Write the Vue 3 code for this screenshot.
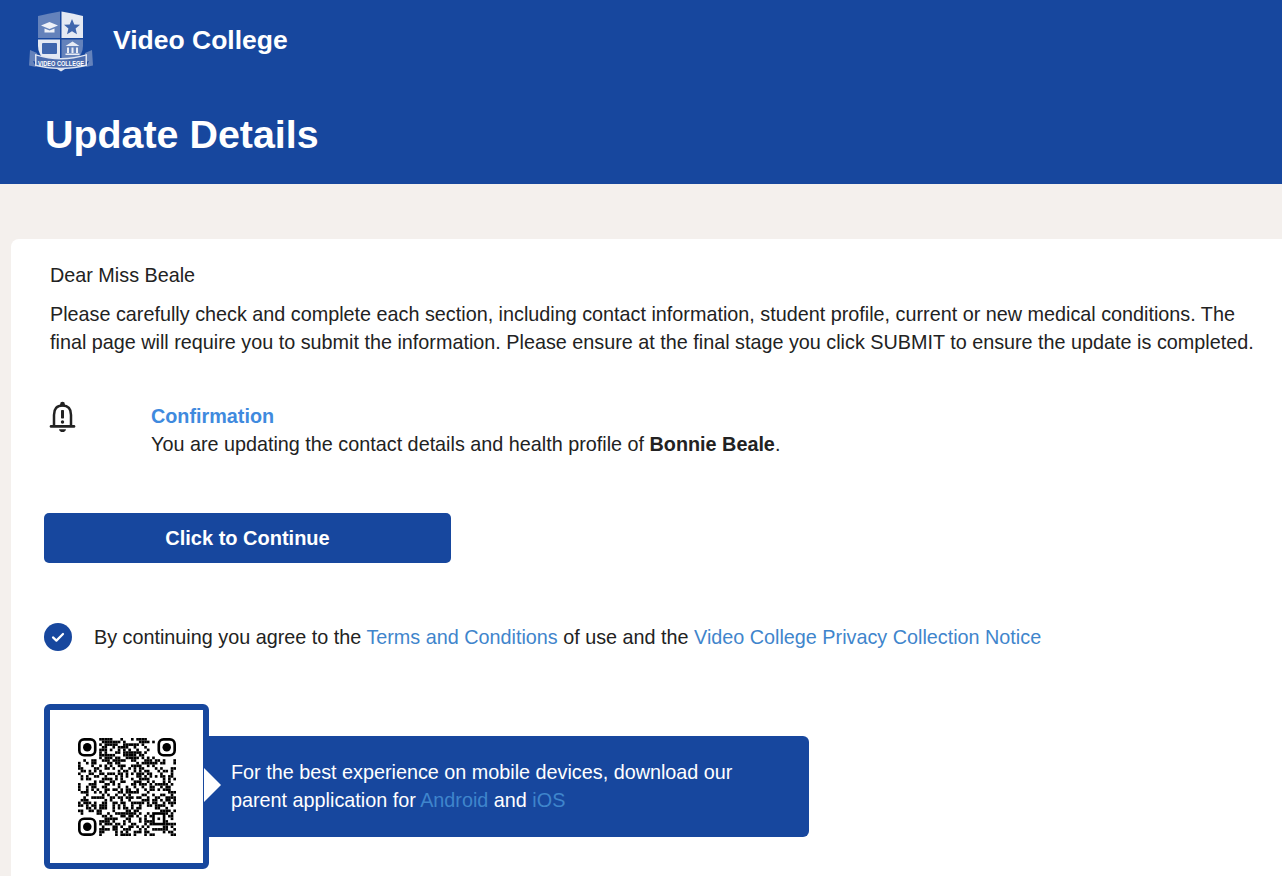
<script setup>
const n = 37
let s = 20240611
const rnd = () => ((s = (s * 1664525 + 1013904223) >>> 0) / 4294967296)
const reserved = (x, y) =>
  (x < 8 && y < 8) ||
  (x > n - 9 && y < 8) ||
  (x < 8 && y > n - 9) ||
  (x >= 28 && x <= 32 && y >= 28 && y <= 32)
const modules = []
for (let y = 0; y < n; y++) {
  for (let x = 0; x < n; x++) {
    if (!reserved(x, y) && rnd() > 0.5) modules.push({ x, y })
  }
}
const finders = [
  { x: 3.5, y: 3.5 },
  { x: n - 3.5, y: 3.5 },
  { x: 3.5, y: n - 3.5 }
]
</script>

<template>
  <div class="page">
    <header class="header">
      <div class="brand">
        <svg class="logo" viewBox="0 0 66 64" aria-hidden="true">
          <path d="M10 6 Q22 3 32 1.5 V28 H10 Z" fill="#6482bb" />
          <path d="M33.5 1.5 Q44 3 55 6 V28 H33.5 Z" fill="#e4e9f3" />
          <path d="M10 29.5 H32 V50 H17 Q10 44 10 36 Z" fill="#e4e9f3" />
          <path d="M33.5 29.5 H55 V36 Q55 44 48 50 H33.5 Z" fill="#6482bb" />
          <path d="M13 15.5 L21.5 12 L30 15.5 L21.5 19 Z" fill="#eef1f8" />
          <path d="M16.5 18.5 L21.5 20.5 L26.5 18.5 V22.5 H16.5 Z" fill="#eef1f8" />
          <path d="M44 9 L46.3 14.4 L52 14.8 L47.6 18.6 L49 24.2 L44 21.2 L39 24.2 L40.4 18.6 L36 14.8 L41.7 14.4 Z" fill="#3f66ad" />
          <rect x="14" y="33" width="15" height="11" rx="1" fill="#3f66ad" />
          <path d="M37.5 36 L44.5 31.5 L51.5 36 Z M39 37.5 h2 v5.5 h-2 Z M43.5 37.5 h2 v5.5 h-2 Z M48 37.5 h2 v5.5 h-2 Z M37.5 43.5 h14 v1.5 h-14 Z" fill="#e8ecf5" />
          <path d="M2 40 L9 43 L9 52 L5 51 L8 57 L1 55.5 Z" fill="#6482bb" />
          <path d="M64 40 L57 43 L57 52 L61 51 L58 57 L65 55.5 Z" fill="#6482bb" />
          <path d="M7 44 Q20 48 33 48 Q46 48 59 44 V56 Q46 59 37 59 L33 61.5 L29 59 Q20 59 7 56 Z" fill="#dfe5f1" />
          <path d="M8.5 45.8 Q20 49.5 33 49.5 Q46 49.5 57.5 45.8 V54.8 Q46 57.8 33 57.8 Q20 57.8 8.5 54.8 Z" fill="#4b6cae" />
          <text x="33" y="56" text-anchor="middle" textLength="46" lengthAdjust="spacingAndGlyphs" class="logo-text">VIDEO COLLEGE</text>
        </svg>
        <span class="brand-name">Video College</span>
      </div>
      <h1 class="title">Update Details</h1>
    </header>

    <main class="card">
      <p class="greeting">Dear Miss Beale</p>
      <p class="intro">
        Please carefully check and complete each section, including contact information, student profile, current or new medical conditions. The final page will require you to submit the information. Please ensure at the final stage you click SUBMIT to ensure the update is completed.
      </p>

      <section class="notice">
        <svg class="bell" viewBox="0 0 28 32" aria-hidden="true">
          <circle cx="13.5" cy="3.2" r="2.4" fill="#222" />
          <path d="M5 25 V14 Q5 4.6 13.5 4.6 Q22 4.6 22 14 V25" fill="none" stroke="#222" stroke-width="2.5" />
          <path d="M2 25.4 H25" stroke="#222" stroke-width="2.6" stroke-linecap="round" />
          <path d="M10 28.2 H17 Q16.5 31 13.5 31 Q10.5 31 10 28.2 Z" fill="#222" />
          <rect x="12" y="9" width="3" height="8.5" rx="0.7" fill="#222" />
          <circle cx="13.5" cy="21" r="1.7" fill="#222" />
        </svg>
        <div class="notice-body">
          <div class="notice-title">Confirmation</div>
          <div>You are updating the contact details and health profile of <strong>Bonnie Beale</strong>.</div>
        </div>
      </section>

      <button class="continue" type="button">Click to Continue</button>

      <div class="agree">
        <span class="tick">
          <svg viewBox="0 0 28 28" aria-hidden="true">
            <path d="M9 14.4 L12.4 17.6 L19 11" fill="none" stroke="#fff" stroke-width="2.2" stroke-linecap="round" stroke-linejoin="round" />
          </svg>
        </span>
        <span>By continuing you agree to the <a class="link">Terms and Conditions</a> of use and the <a class="link">Video College Privacy Collection Notice</a></span>
      </div>

      <div class="app-promo">
        <div class="qr-box">
          <svg class="qr" viewBox="0 0 37 37" aria-hidden="true">
            <rect v-for="(m, i) in modules" :key="i" :x="m.x" :y="m.y" width="1" height="1" fill="#000" />
            <g v-for="(f, i) in finders" :key="'f' + i">
              <rect :x="f.x - 3" :y="f.y - 3" width="6" height="6" rx="1.8" fill="none" stroke="#000" stroke-width="1" />
              <circle :cx="f.x" :cy="f.y" r="1.6" fill="#000" />
            </g>
            <rect x="28.5" y="28.5" width="4" height="4" fill="none" stroke="#000" stroke-width="1" />
            <rect x="30" y="30" width="1" height="1" fill="#000" />
          </svg>
        </div>
        <div class="promo-text">
          <span class="arrow"></span>
          <p>For the best experience on mobile devices, download our parent application for <a class="link">Android</a> and <a class="link">iOS</a></p>
        </div>
      </div>
    </main>
  </div>
</template>

<style>
html, body {
  margin: 0;
  background: #f4f0ed;
}
</style>

<style scoped>
.page {
  width: 1282px;
  height: 876px;
  overflow: hidden;
  background: #f4f0ed;
  font-family: "Liberation Sans", Arial, sans-serif;
  font-size: 19.8px;
  line-height: 28px;
  color: #222;
}
.header {
  height: 184px;
  box-sizing: border-box;
  background: #17479e;
  color: #fff;
  padding: 10px 0 0 28px;
}
.brand {
  display: flex;
  align-items: center;
  gap: 19px;
  height: 64px;
}
.logo {
  width: 66px;
  height: 64px;
  flex: none;
}
.logo-text {
  font-family: "Liberation Sans", Arial, sans-serif;
  font-size: 8px;
  font-weight: 700;
  fill: #fff;
}
.brand-name {
  font-size: 26.5px;
  font-weight: 700;
  line-height: 30px;
  padding-bottom: 4px;
}
.title {
  margin: 37px 0 0 17px;
  font-size: 39.4px;
  line-height: 46px;
  font-weight: 700;
}
.card {
  margin: 55px 0 0 11px;
  height: 640px;
  box-sizing: border-box;
  padding: 22px 0 0 33px;
  background: #fff;
  border-radius: 8px 0 0 0;
}
.greeting {
  margin: 0 0 11px 6px;
}
.intro {
  margin: 0 0 0 6px;
  width: 1210px;
}
.notice {
  display: flex;
  margin: 46px 0 0 5px;
}
.bell {
  width: 28px;
  height: 32px;
  flex: none;
  margin-top: -1px;
}
.notice-body {
  margin-left: 74px;
}
.notice-title {
  font-weight: 700;
  color: #3f8ade;
}
.continue {
  display: block;
  width: 407px;
  height: 50px;
  margin: 55px 0 0 0;
  border: 0;
  border-radius: 5px;
  background: #17479e;
  color: #fff;
  font-family: "Liberation Sans", Arial, sans-serif;
  font-size: 20px;
  font-weight: 700;
  cursor: pointer;
}
.agree {
  display: flex;
  align-items: center;
  gap: 22px;
  margin-top: 60px;
  height: 28px;
}
.tick {
  width: 28px;
  height: 28px;
  border-radius: 50%;
  background: #17479e;
  flex: none;
  display: block;
}
.tick svg {
  display: block;
}
.link {
  color: #3f85cc;
  cursor: pointer;
}
.app-promo {
  display: flex;
  align-items: center;
  margin-top: 53px;
}
.qr-box {
  width: 165px;
  height: 165px;
  box-sizing: border-box;
  border: 6px solid #17479e;
  border-radius: 6px;
  background: #fff;
  display: flex;
  align-items: center;
  justify-content: center;
  flex: none;
}
.qr {
  width: 98px;
  height: 98px;
  display: block;
  margin-left: 1px;
}
.promo-text {
  position: relative;
  width: 600px;
  height: 101px;
  box-sizing: border-box;
  padding: 22px 60px 0 22px;
  background: #17479e;
  border-radius: 0 6px 6px 0;
  color: #fff;
}
.promo-text p {
  margin: 0;
}
.arrow {
  position: absolute;
  left: -5px;
  top: 32px;
  width: 0;
  height: 0;
  border-top: 17.5px solid transparent;
  border-bottom: 17.5px solid transparent;
  border-left: 17px solid #fff;
}
</style>
